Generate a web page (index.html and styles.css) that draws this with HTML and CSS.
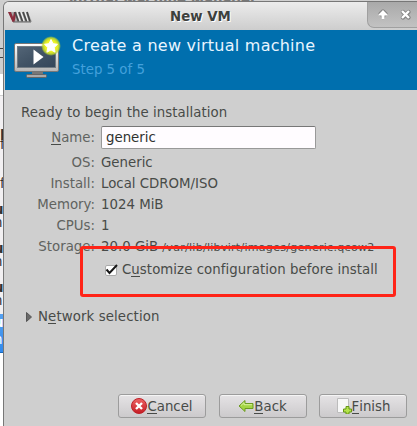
FILE: index.html
```html
<!DOCTYPE html>
<html lang="en">
<head>
<meta charset="utf-8">
<title>New VM</title>
<link rel="stylesheet" href="styles.css">
</head>
<body>
<div class="desktop">
  <div class="behind-title">Virtual Machine Manager</div>
  <aside class="behind">
    <i class="line upper"></i><i class="line middle"></i>
    <b class="bit b1">p</b><span class="bit b2">f</span><span class="bit b3">f</span><b class="bit b4">u</b><span class="bit b5">n</span><b class="bit b6">u</b><span class="bit b7">n</span><b class="bit b8">u</b><span class="bit b9">n</span>
    <div class="selected"><b>u</b><span>n</span></div>
  </aside>
  <main class="window">
    <header class="titlebar">
      <svg class="logo" width="26" height="13" viewBox="0 0 26 13"><path d="M1 1h20l4 10H6z" fill="#aaa"/><path d="M1 1h3l2 5 1-5h2.500L7.500 11H5.500z" fill="#8b2d3d"/><path d="M10 1l3 9M14 1l3 9M18 1l3 9" stroke="#f3f3f3" stroke-width="1.200"/><path d="M8 1l3.500 9.500M12 1l3.500 9.500M16 1l3.500 9.500M20 1l3 9.500" stroke="#494949" stroke-width="1.700"/><path d="M6 11h18" stroke="#666"/></svg>
      <h1>New VM</h1>
      <div class="controls">
        <svg width="46" height="26" viewBox="0 0 46 26"><g fill="none" stroke="#858585" stroke-width="4.400" stroke-linecap="round" stroke-linejoin="round"><path d="M15 16v-5M12.500 13l2.500-2.500 2.500 2.500"/><path d="M35 11l5.500 5.500M40.500 11L35 16.500"/></g><path d="M15 9l4.500 4.500v1h-3v3.500h-3v-3.500h-3v-1z" fill="#fff"/><path d="M34 10l7 7M41 10l-7 7" stroke="#fff" stroke-width="2.400"/></svg>
      </div>
    </header>
    <section class="banner">
      <svg class="monitor" width="50" height="44" viewBox="0 0 50 44">
        <defs><linearGradient id="frame" x2="0" y2="1"><stop stop-color="#fff"/><stop offset="1" stop-color="#b5b5b5"/></linearGradient><linearGradient id="screen" x2="1" y2="1"><stop stop-color="#536577"/><stop offset=".5" stop-color="#415365"/><stop offset="1" stop-color="#34465b"/></linearGradient><radialGradient id="glow"><stop stop-color="#ffff65"/><stop offset=".6" stop-color="#e8f020"/><stop offset=".82" stop-color="#c4da2c" stop-opacity=".85"/><stop offset="1" stop-color="#a4cb36" stop-opacity="0"/></radialGradient></defs>
        <path d="M18 34h11v6H18z" fill="#777"/><rect x="12.500" y="38.500" width="20" height="3" rx="1" fill="#aaa" stroke="#666"/>
        <rect x=".5" y="7.500" width="44" height="28" rx="1.500" fill="url(#frame)" stroke="#777"/><rect x="3.500" y="10.500" width="38" height="21" fill="url(#screen)" stroke="#717b83"/>
        <path d="M19.500 13.500v15l10-7.500z" fill="#fff"/>
        <circle cx="37" cy="10" r="10" fill="url(#glow)"/><path d="M37 3.500l2 4.200 4.500.6-3.300 3.200.9 4.700-4.100-2.300-4.100 2.300.9-4.700-3.300-3.200 4.500-.6z" fill="#fff" stroke="#fff"/>
      </svg>
      <div class="heading"><h2>Create a new virtual machine</h2><p>Step 5 of 5</p></div>
    </section>
    <section class="content">
      <p class="ready">Ready to begin the installation</p>
      <dl>
        <dt class="tall"><u>N</u>ame:</dt><dd class="tall"><div class="field">generic</div></dd>
        <dt>OS:</dt><dd>Generic</dd>
        <dt>Install:</dt><dd>Local CDROM/ISO</dd>
        <dt>Memory:</dt><dd>1024 MiB</dd>
        <dt>CPUs:</dt><dd>1</dd>
        <dt>Storage:</dt><dd>20.0 GiB <small>/var/lib/libvirt/images/generic.qcow2</small></dd>
      </dl>
      <div class="check"><svg width="15" height="14" viewBox="0 0 15 14"><rect x="1.500" y="2.500" width="11" height="10" rx="1.500" fill="#fff" stroke="#aaa"/><path d="M2.500 6.500l3 3.500L13 2" fill="none" stroke="#171717" stroke-width="2"/></svg><span>C<u>u</u>stomize configuration before install</span></div>
      <div class="network"><svg width="7" height="10" viewBox="0 0 7 10"><path d="M.5.500v9l5-4.500z" fill="#696969" stroke="#555"/></svg><span>N<u>e</u>twork selection</span></div>
    </section>
    <footer>
      <div class="button"><svg width="16" height="16" viewBox="0 0 16 16"><defs><linearGradient id="red" x2="0" y2="1"><stop stop-color="#ed6464"/><stop offset="1" stop-color="#c51c24"/></linearGradient></defs><circle cx="8" cy="8" r="7.500" fill="url(#red)" stroke="#bd222a"/><path d="M5 5l6 6M11 5l-6 6" stroke="#fff" stroke-width="2.400"/></svg><span><u>C</u>ancel</span></div>
      <div class="button"><svg width="16" height="16" viewBox="0 0 16 16"><path d="M1 8l6-5.500v3h8v5H7v3z" fill="#a4d543" stroke="#6c9b22" stroke-linejoin="round"/><path d="M3 7.500l3-2.800v2h8" fill="none" stroke="#d9f39b"/></svg><span><u>B</u>ack</span></div>
      <div class="button"><svg width="16" height="16" viewBox="0 0 16 16"><path d="M1.500.500h11v14h-11z" fill="#f7f7f7" stroke="#bcbcbc"/><path d="M10 8.500h3V11h2.500v3H13v2h-3v-2H7.500v-3H10z" fill="#b4e34b" stroke="#659614"/></svg><span><u>F</u>inish</span></div>
    </footer>
  </main>
  <div class="highlight"></div>
</div>
</body>
</html>
```
FILE: styles.css
```css
* { box-sizing: border-box; }
body { margin: 0; font: 13.33px/21px "DejaVu Sans", sans-serif; color: #484b48; }
h1, h2, p, dl, dd { margin: 0; }
svg { display: block; flex: none; }
u { text-decoration: none; box-shadow: inset 0 -1px #484b48; display: inline-block; line-height: 15px; }
.desktop { position: relative; width: 417px; height: 426px; overflow: hidden; display: grid; grid-template-columns: 3px 414px; grid-template-rows: 1px 425px; background: #d0d0d0; }
.behind-title { grid-column: 1 / 3; height: 1px; overflow: hidden; padding-left: 68px; font-weight: bold; line-height: 1px; color: #777; }
.behind { position: relative; overflow: hidden; background: linear-gradient(#cecece 0 73px, #fff 73px 94px, #cfcfcf 94px 95px, #f2f0f2 95px 313px, #fff 313px); }
.line { position: absolute; width: 3px; height: 1px; background: #444; }
.upper { top: 47px; } .middle { top: 56px; }
.bit { position: absolute; left: 0; line-height: 11px; color: #333; }
.b1 { top: 126px; } .b2 { top: 138px; } .b3 { top: 177px; }
.b4, .b5, .b6, .b7, .b8, .b9 { left: -6px; }
.b4 { top: 203px; } .b5 { top: 216px; } .b6 { top: 242px; } .b7 { top: 255px; } .b8 { top: 281px; } .b9 { top: 294px; }
.selected { position: absolute; top: 313px; width: 3px; height: 39px; overflow: hidden; background: linear-gradient(#55a1f2, #318aed); border-bottom: 1px solid #1768bd; color: #fff; }
.selected b, .selected span { display: block; margin-left: -6px; line-height: 17px; }
.window { display: flex; flex-direction: column; border: 1px solid #777; border-width: 1px 0 0 1px; border-radius: 6px 0 0 0; background: #cfcfcf; overflow: hidden; }
.titlebar { display: flex; height: 28px; padding-left: 3px; background: linear-gradient(#ececec, #cdcdcd); }
.logo { margin-top: 9px; }
h1 { flex: 1; padding: 3px 0 0 137px; font-size: 13.33px; line-height: 23px; color: #3d403d; text-shadow: 1px 1px #fff; }
.controls { width: 50px; height: 26px; border: 1px solid #a0a0a0; border-width: 0 0 1px 1px; border-radius: 0 0 0 7px; background: linear-gradient(#a9a9a9, #c2c2c2); }
.controls svg { margin-top: -1px; }
.banner { display: flex; height: 60px; margin-left: 1px; padding-left: 9px; background: #006fae; }
.monitor { margin-top: 6px; }
.heading { padding: 5px 0 0 8px; }
h2 { font-size: 16px; line-height: 21px; font-weight: normal; letter-spacing: .25px; color: #e8f5ff; }
.heading p { padding-top: 3px; color: #44a1dc; }
.content { height: 300px; padding: 12px 0 0 17px; }
.ready { letter-spacing: .06px; }
dl { display: grid; grid-template-columns: 74px 1fr; column-gap: 6px; }
dt { text-align: right; color: #606360; }
dt, dd { height: 21px; white-space: nowrap; }
.tall { height: 29px; padding-top: 3px; line-height: 23px; }
.field { width: 215px; height: 23px; padding-left: 4px; line-height: 21px; border: 1px solid #999; border-top-color: #777; border-radius: 2px; background: #fffcff; color: #303330; }
small { font-size: 11.1px; letter-spacing: .25px; }
.check { display: flex; align-items: center; height: 21px; margin: 2px 0 0 83px; gap: 3px; letter-spacing: .05px; }
.network { display: flex; align-items: center; height: 21px; margin: 26px 0 0 5px; gap: 5px; letter-spacing: .1px; }
footer { display: flex; gap: 12.5px; margin: 4px 0 0 114px; }
.button { width: 88px; height: 24px; display: flex; align-items: center; justify-content: center; border: 1px solid #9c9c9c; border-radius: 3px; background: linear-gradient(#e5e3e5, #cccacc); box-shadow: inset 0 1px #f5f5f5; }
.highlight { position: absolute; left: 80px; top: 246px; width: 316px; height: 51px; border: 3px solid #ff2418; border-radius: 3px; }
```
